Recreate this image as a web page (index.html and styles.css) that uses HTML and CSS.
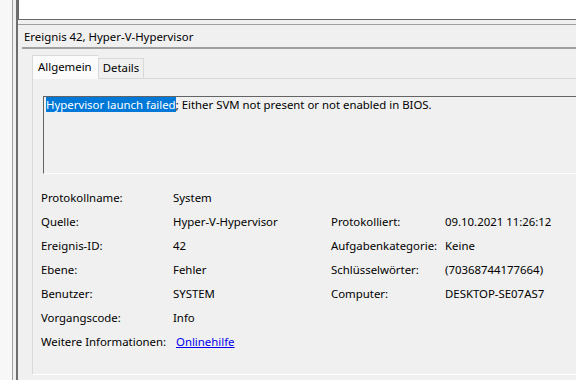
FILE: index.html
```html
<!DOCTYPE html>
<html lang="de">
<head>
    <meta charset="UTF-8">
    <title>Ereignis 42, Hyper-V-Hypervisor</title>
    <link rel="stylesheet" href="styles.css">
</head>
<body>
    <div class="window">
        <div class="nav-pane"></div>
        <div class="splitter"></div>

        <div class="main">
            <div class="event-list"></div>

            <div class="detail">
                <div class="detail-title">Ereignis 42, Hyper-V-Hypervisor</div>

                <div class="tabs">
                    <div class="tab-strip">
                        <span class="tab active">Allgemein</span>
                        <span class="tab">Details</span>
                    </div>

                    <div class="tab-page">
                        <div class="message"><span class="sel">Hypervisor launch failed</span>; Either SVM not present or not enabled in BIOS.</div>

                        <div class="props">
                            <span>Protokollname:</span><span>System</span><span></span><span></span>
                            <span>Quelle:</span><span>Hyper-V-Hypervisor</span><span>Protokolliert:</span><span>09.10.2021 11:26:12</span>
                            <span>Ereignis-ID:</span><span>42</span><span>Aufgabenkategorie:</span><span>Keine</span>
                            <span>Ebene:</span><span>Fehler</span><span>Schlüsselwörter:</span><span>(70368744177664)</span>
                            <span>Benutzer:</span><span>SYSTEM</span><span>Computer:</span><span>DESKTOP-SE07AS7</span>
                            <span>Vorgangscode:</span><span>Info</span><span></span><span></span>
                            <span>Weitere Informationen:</span><span><a class="link" href="#">Onlinehilfe</a></span><span></span><span></span>
                        </div>
                    </div>
                </div>
            </div>
        </div>
    </div>
</body>
</html>
```

FILE: styles.css
```css
/* Global */
body {
    margin: 0;
    font-family: "Noto Sans", "Open Sans", sans-serif;
    font-size: 11.4px;
    color: #000;
    background-color: #f0f0f0;
    overflow: hidden;
}

.window {
    display: flex;
    height: 380px;
}

/* Left tree pane + splitter */
.nav-pane {
    width: 12px;
    background-color: #f7f7f7;
    border-right: 1px solid #a0a0a0;
}

.splitter {
    width: 3px;
    background-color: #f0f0f0;
    border-right: 2px solid #6d6d6d;
}

.main {
    flex: 1;
    display: flex;
    flex-direction: column;
    min-width: 0;
}

/* Event list (top) */
.event-list {
    height: 19px;
    background-color: #fff;
    border-left: 1px solid #696969;
    border-bottom: 1px solid #696969;
}

/* Detail pane */
.detail {
    flex: 1;
    margin-top: 4px;
    border-top: 1px solid #a0a0a0;
    padding-left: 4px;
    display: flex;
    flex-direction: column;
}

.detail-title {
    padding: 3px 0 1px 2px;
    line-height: 18px;
    border-bottom: 2px solid #a0a0a0;
    white-space: nowrap;
}

/* Tabs */
.tabs {
    flex: 1;
    margin: 6px 0 5px 10px;
    display: flex;
    flex-direction: column;
}

.tab-strip {
    display: flex;
    align-items: flex-end;
    height: 23px;
}

.tab {
    height: 19px;
    line-height: 18px;
    padding: 0 4px;
    background-color: #f0f0f0;
    border: 1px solid #d9d9d9;
    border-bottom: none;
}

.tab.active {
    height: 23px;
    line-height: 22px;
    padding: 0 6px 0 5px;
    background-color: #fbfbfb;
    border-right: none;
    position: relative;
    z-index: 1;
    margin-bottom: -1px;
}

.tab-page {
    flex: 1;
    border: 1px solid #d9d9d9;
    border-right: none;
    border-bottom-color: #fff;
    padding-left: 10px;
}

/* Message box */
.message {
    height: 75px;
    margin-top: 17px;
    border-top: 1px solid #646464;
    border-left: 1px solid #646464;
    border-bottom: 1px solid #fff;
    padding: 1px 0 0 2px;
    line-height: 14px;
    white-space: nowrap;
}

.sel {
    background-color: #0078d7;
    color: #fff;
}

/* Property grid */
.props {
    display: grid;
    grid-template-columns: 132px 158px 114px auto;
    grid-auto-rows: 24px;
    align-items: center;
    margin: 11px 0 0 -2px;
    white-space: nowrap;
}

.link {
    color: #0000ee;
    margin-left: 3px;
}
```
